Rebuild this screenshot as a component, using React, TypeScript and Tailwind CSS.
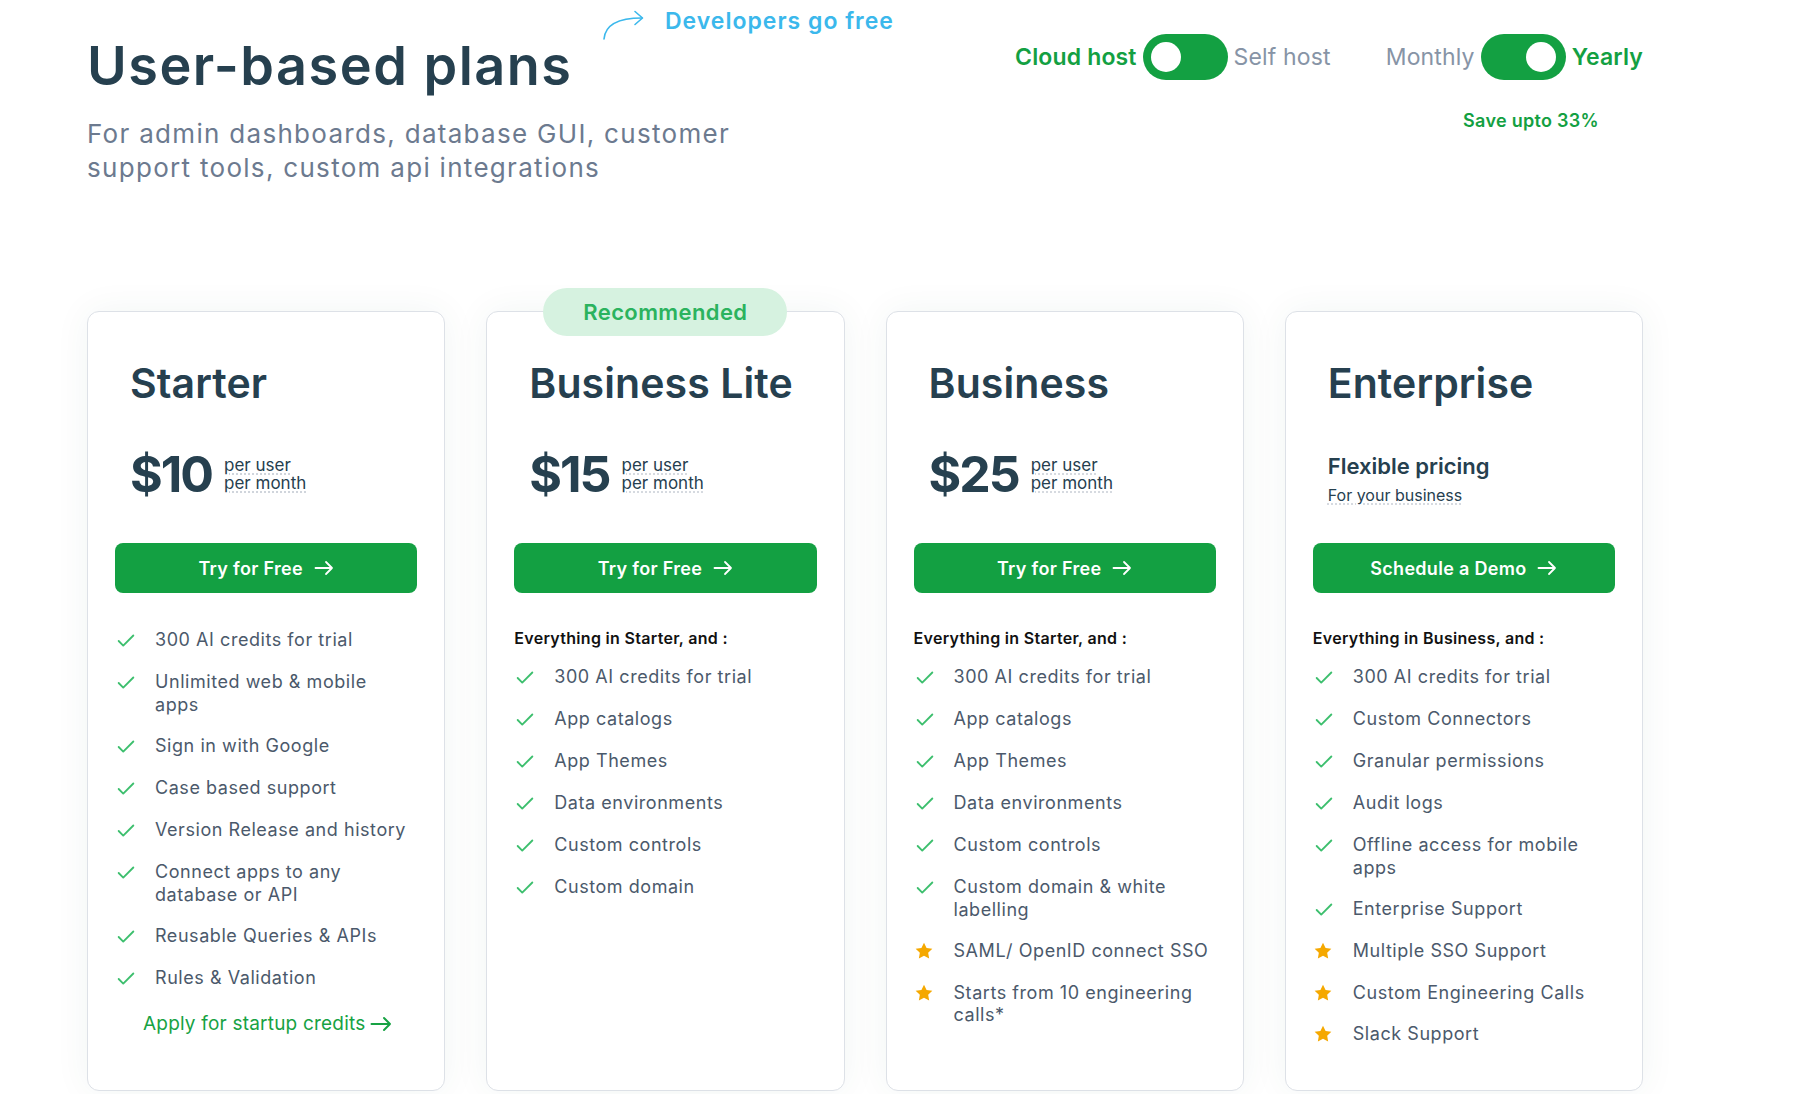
import { Check } from 'lucide-react';

type Feature = { text: string; star?: boolean };

interface Plan {
  name: string;
  price?: string;
  cta: string;
  intro?: string;
  recommended?: boolean;
  features: Feature[];
  startupLink?: boolean;
}

// line breaks follow the reference wrapping
const plans: Plan[] = [
  {
    name: 'Starter',
    price: '$10',
    cta: 'Try for Free',
    startupLink: true,
    features: [
      { text: '300 AI credits for trial' },
      { text: 'Unlimited web & mobile\napps' },
      { text: 'Sign in with Google' },
      { text: 'Case based support' },
      { text: 'Version Release and history' },
      { text: 'Connect apps to any\ndatabase or API' },
      { text: 'Reusable Queries & APIs' },
      { text: 'Rules & Validation' },
    ],
  },
  {
    name: 'Business Lite',
    price: '$15',
    cta: 'Try for Free',
    intro: 'Everything in Starter, and :',
    recommended: true,
    features: [
      { text: '300 AI credits for trial' },
      { text: 'App catalogs' },
      { text: 'App Themes' },
      { text: 'Data environments' },
      { text: 'Custom controls' },
      { text: 'Custom domain' },
    ],
  },
  {
    name: 'Business',
    price: '$25',
    cta: 'Try for Free',
    intro: 'Everything in Starter, and :',
    features: [
      { text: '300 AI credits for trial' },
      { text: 'App catalogs' },
      { text: 'App Themes' },
      { text: 'Data environments' },
      { text: 'Custom controls' },
      { text: 'Custom domain & white\nlabelling' },
      { text: 'SAML/ OpenID connect SSO', star: true },
      { text: 'Starts from 10 engineering\ncalls*', star: true },
    ],
  },
  {
    name: 'Enterprise',
    cta: 'Schedule a Demo',
    intro: 'Everything in Business, and :',
    features: [
      { text: '300 AI credits for trial' },
      { text: 'Custom Connectors' },
      { text: 'Granular permissions' },
      { text: 'Audit logs' },
      { text: 'Offline access for mobile\napps' },
      { text: 'Enterprise Support' },
      { text: 'Multiple SSO Support', star: true },
      { text: 'Custom Engineering Calls', star: true },
      { text: 'Slack Support', star: true },
    ],
  },
];

function Star() {
  return (
    <svg width="20" height="20" viewBox="0 0 24 24" className="shrink-0">
      <polygon
        points="12,2 15.09,8.26 22,9.27 17,14.14 18.18,21.02 12,17.77 5.82,21.02 7,14.14 2,9.27 8.91,8.26"
        fill="#f5a800"
      />
    </svg>
  );
}

function Arrow({ w = 20, h = 16, stroke = 1.8 }: { w?: number; h?: number; stroke?: number }) {
  return (
    <svg width={w} height={h} viewBox={`0 0 ${w} ${h}`} fill="none" stroke="currentColor" strokeWidth={stroke} strokeLinecap="round" strokeLinejoin="round">
      <path d={`M1.5 ${h / 2}H${w - 2}M${w - 8} ${h / 2 - 6}l6 6-6 6`} />
    </svg>
  );
}

function Toggle({ on }: { on: boolean }) {
  return (
    <div className={`w-[85px] h-[46px] rounded-full bg-[#13a042] flex items-center ${on ? 'justify-end pr-[10px]' : 'justify-start pl-[8px]'}`}>
      <div className="w-[30px] h-[30px] rounded-full bg-white" />
    </div>
  );
}

function PlanCard({ plan }: { plan: Plan }) {
  return (
    <div className="relative min-h-[780px] bg-white border border-[#dde1e7] rounded-[12px] shadow-[0_0_36px_rgba(20,90,70,0.06)] pt-[47px] px-[27px] pb-[40px]">
      {plan.recommended && (
        <div className="absolute top-[-24px] left-1/2 -translate-x-1/2 w-[244px] h-[48px] rounded-full bg-[#d6f2e0] flex items-center justify-center text-[22px] font-semibold tracking-[0.4px] text-[#2bb35e]">
          Recommended
        </div>
      )}

      <div className="pl-[15px]">
        <h2 className="text-[41px] leading-[48px] font-semibold text-[#26404f] tracking-[0.1px]">{plan.name}</h2>
        {plan.price ? (
          <div className="mt-[37px] flex items-start h-[60px]">
            <span className="text-[50px] leading-[60px] font-bold text-[#26404f] tracking-[-2px]">{plan.price}</span>
            <div className="ml-[12px] mt-[12px] flex flex-col text-[17px] leading-[18px] text-[#26404f]">
              <span className="w-fit underline decoration-dotted decoration-[#c9ced6] underline-offset-[3px]">per user</span>
              <span className="w-fit underline decoration-dotted decoration-[#c9ced6] underline-offset-[3px]">per month</span>
            </div>
          </div>
        ) : (
          <div className="mt-[45px] h-[53px]">
            <div className="text-[22px] leading-[28px] font-semibold text-[#26404f]">Flexible pricing</div>
            <div className="mt-[5px] w-fit text-[16px] leading-[20px] text-[#26404f] underline decoration-dotted decoration-[#c9ced6] underline-offset-[3px]">
              For your business
            </div>
          </div>
        )}
      </div>

      <button className={`${plan.price ? 'mt-[39px]' : 'mt-[38px]'} w-full h-[50px] rounded-[8px] bg-[#13a042] text-white flex items-center justify-center gap-[11px] text-[18px] font-semibold tracking-[0.3px]`}>
        {plan.cta}
        <Arrow />
      </button>

      {plan.intro && (
        <div className="mt-[35px] text-[16px] leading-[20px] font-semibold tracking-[0.3px] text-[#111111]">{plan.intro}</div>
      )}

      <ul className={`${plan.intro ? 'mt-[18px]' : 'mt-[36px]'} flex flex-col gap-[19px]`}>
        {plan.features.map((f) => (
          <li key={f.text} className="flex items-start">
            <div className="w-[40px] shrink-0 flex pt-[1px]">
              {f.star ? <Star /> : <Check size={22} strokeWidth={2} color="#3dbf6e" />}
            </div>
            <span className="whitespace-pre-line text-[18px] leading-[22.5px] text-[#4b596b] tracking-[0.55px]">{f.text}</span>
          </li>
        ))}
      </ul>

      {plan.startupLink && (
        <a className="mt-[22px] ml-[28px] flex items-center gap-[5px] text-[19px] leading-[24px] tracking-[0.2px] text-[#17a243]">
          Apply for startup credits
          <Arrow w={22} h={16} stroke={2} />
        </a>
      )}
    </div>
  );
}

export default function App() {
  return (
    <div className="min-h-screen bg-white font-['Inter','Open_Sans',sans-serif]">
      <div className="w-[1556px] ml-[87px] pb-[10px]">
        <header className="flex justify-between items-start">
          <div className="relative pt-[35px]">
            <svg width="44" height="32" viewBox="0 0 44 32" fill="none" stroke="#3bb8ec" strokeWidth="1.6" strokeLinecap="round" strokeLinejoin="round" className="absolute left-[515px] top-[9px]">
              <path d="M2 30C3 18 13 9 40 9" />
              <path d="M33 2.5L40.5 9L33 15.5" />
            </svg>
            <div className="absolute left-[578px] top-[7px] whitespace-nowrap text-[23px] leading-[28px] font-semibold tracking-[1px] text-[#3bb8ec]">
              Developers go free
            </div>
            <h1 className="text-[54px] leading-[62px] font-semibold text-[#26404f] tracking-[1.5px]">User-based plans</h1>
            <p className="mt-[20px] text-[26px] leading-[34px] tracking-[1.3px] text-[#6c7a8f]">
              For admin dashboards, database GUI, customer
              <br />
              support tools, custom api integrations
            </p>
          </div>

          <div className="pt-[34px] flex flex-col items-end">
            <div className="flex items-center text-[23px] leading-[28px] tracking-[0.15px]">
              <span className="font-semibold text-[#13a042]">Cloud host</span>
              <div className="mx-[6px]">
                <Toggle on={false} />
              </div>
              <span className="text-[#8794a6]">Self host</span>
              <span className="ml-[55px] text-[#8794a6]">Monthly</span>
              <div className="mx-[6px]">
                <Toggle on />
              </div>
              <span className="font-semibold text-[#13a042]">Yearly</span>
            </div>
            <div className="mt-[31px] mr-[44px] text-[18px] leading-[20px] font-semibold tracking-[0.3px] text-[#13a042]">Save upto 33%</div>
          </div>
        </header>

        <div className="mt-[126px] grid grid-cols-4 gap-[41px] items-stretch">
          {plans.map((p) => (
            <PlanCard key={p.name} plan={p} />
          ))}
        </div>
      </div>
    </div>
  );
}
